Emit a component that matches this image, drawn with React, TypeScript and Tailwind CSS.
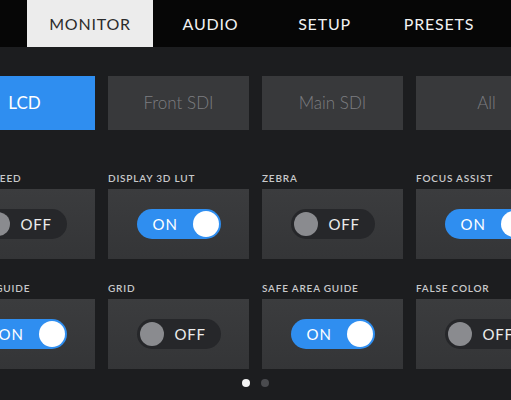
const tabs = [
  { label: "MONITOR", w: "w-[126px]", active: true },
  { label: "AUDIO", w: "w-[115px]", active: false },
  { label: "SETUP", w: "w-[113px]", active: false },
  { label: "PRESETS", w: "w-[116px]", active: false },
];

const outputs = [
  { label: "LCD", active: true },
  { label: "Front SDI", active: false },
  { label: "Main SDI", active: false },
  { label: "All", active: false },
];

const rows = [
  [
    { label: "CLEAN FEED", on: false },
    { label: "DISPLAY 3D LUT", on: true },
    { label: "ZEBRA", on: false },
    { label: "FOCUS ASSIST", on: true },
  ],
  [
    { label: "FRAME GUIDE", on: true },
    { label: "GRID", on: false },
    { label: "SAFE AREA GUIDE", on: true },
    { label: "FALSE COLOR", on: false },
  ],
];

function Toggle({ on }: { on: boolean }) {
  if (on) {
    return (
      <div className="flex h-[30px] w-[84px] items-center justify-between rounded-full bg-[#2f8ef0] pl-[16px] pr-[2px]">
        <span className="text-[15px] tracking-[0.06em] text-white">ON</span>
        <span className="h-[26px] w-[26px] rounded-full bg-white" />
      </div>
    );
  }
  return (
    <div className="flex h-[30px] w-[84px] items-center gap-[11px] rounded-full bg-[#26272a] pl-[3px]">
      <span className="h-[24px] w-[24px] rounded-full bg-[#8a8b8f]" />
      <span className="text-[15px] tracking-[0.05em] text-[#ececec]">OFF</span>
    </div>
  );
}

export default function App() {
  return (
    <div className="h-[400px] w-[511px] overflow-hidden bg-[#1c1d1f] font-['Lato',sans-serif]">
      <div className="flex h-[47px] bg-[#060606] pl-[27px]">
        {tabs.map((t) => (
          <div
            key={t.label}
            className={`${t.w} flex shrink-0 items-center justify-center text-[16px] tracking-[0.05em] ${
              t.active ? "bg-[#ececec] text-[#2b2b2b]" : "text-[#f2f2f2]"
            }`}
          >
            {t.label}
          </div>
        ))}
      </div>

      <div className="ml-[-46px] w-[608px]">
        <div className="mt-[29px] grid grid-cols-[141px_141px_141px_141px] gap-x-[13px]">
          {outputs.map((o) => (
            <div
              key={o.label}
              className={`flex h-[54px] items-center justify-center text-[17px] ${
                o.active ? "bg-[#2f8ef0] text-white" : "bg-[#38393b] font-light text-[#7d7e81]"
              }`}
            >
              {o.label}
            </div>
          ))}
        </div>

        {rows.map((row, i) => (
          <div
            key={i}
            className={`grid grid-cols-[141px_141px_141px_141px] gap-x-[13px] ${i === 0 ? "mt-[41px]" : "mt-[22px]"}`}
          >
            {row.map((c) => (
              <div key={c.label} className="flex flex-col">
                <div className="mb-[4px] h-[14px] text-[10px] font-semibold leading-[14px] tracking-[0.08em] text-[#c9c9cb]">
                  {c.label}
                </div>
                <div className="flex h-[70px] items-center justify-center bg-gradient-to-b from-[#3b3c3e] to-[#343537]">
                  <Toggle on={c.on} />
                </div>
              </div>
            ))}
          </div>
        ))}
      </div>

      <div className="mt-[10px] flex justify-center gap-[11px]">
        <span className="h-[8px] w-[8px] rounded-full bg-[#f4f4f4]" />
        <span className="h-[8px] w-[8px] rounded-full bg-[#4a4b4e]" />
      </div>
    </div>
  );
}
